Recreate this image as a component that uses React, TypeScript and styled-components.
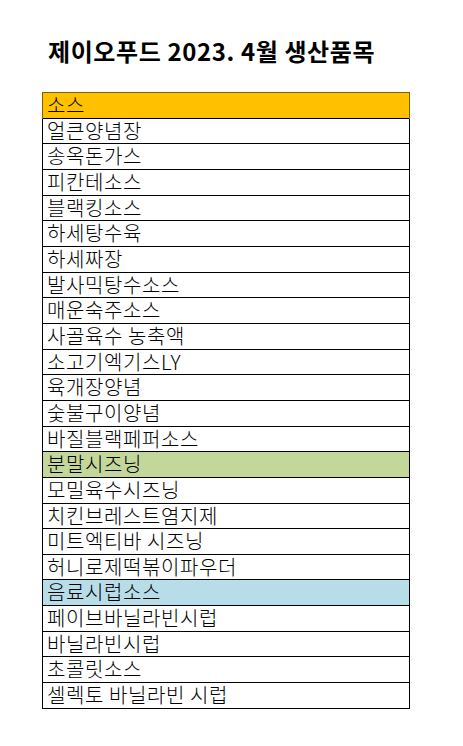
import styled, { createGlobalStyle } from "styled-components";

const Global = createGlobalStyle`
  body {
    margin: 0;
    background: #fff;
    font-family: "Noto Sans CJK KR", "Noto Sans", sans-serif;
  }
`;

const Page = styled.div`
  padding: 36px 0 0 42px;
  width: 368px;
`;

const Title = styled.h1`
  margin: 0 0 26px 6px;
  font-size: 24px;
  line-height: 30px;
  font-weight: 700;
  color: #000;
  letter-spacing: 0.6px;
`;

const Sheet = styled.div`
  border: 1px solid #000;
  display: flex;
  flex-direction: column;
`;

const Row = styled.div<{ $bg?: string }>`
  height: 24.67px;
  border-top: 1px solid #000;
  &:first-child {
    border: 1px solid #7f6000;
    margin: -1px;
  }
  background: ${(p) => p.$bg || "#fff"};
  padding-left: 4px;
  font-size: 20px;
  line-height: 24px;
  font-weight: 300;
  letter-spacing: 0.6px;
  color: #000;
  white-space: nowrap;
`;

const rows: { name: string; bg?: string }[] = [
  { name: "소스", bg: "#ffc000" },
  { name: "얼큰양념장" },
  { name: "송옥돈가스" },
  { name: "피칸테소스" },
  { name: "블랙킹소스" },
  { name: "하세탕수육" },
  { name: "하세짜장" },
  { name: "발사믹탕수소스" },
  { name: "매운숙주소스" },
  { name: "사골육수 농축액" },
  { name: "소고기엑기스LY" },
  { name: "육개장양념" },
  { name: "숯불구이양념" },
  { name: "바질블랙페퍼소스" },
  { name: "분말시즈닝", bg: "#c4d79b" },
  { name: "모밀육수시즈닝" },
  { name: "치킨브레스트염지제" },
  { name: "미트엑티바 시즈닝" },
  { name: "허니로제떡볶이파우더" },
  { name: "음료시럽소스", bg: "#b7dee8" },
  { name: "페이브바닐라빈시럽" },
  { name: "바닐라빈시럽" },
  { name: "초콜릿소스" },
  { name: "셀렉토 바닐라빈 시럽" },
];

export default function App() {
  return (
    <Page>
      <Global />
      <Title>제이오푸드 2023. 4월 생산품목</Title>
      <Sheet>
        {rows.map((r) => (
          <Row key={r.name} $bg={r.bg}>
            {r.name}
          </Row>
        ))}
      </Sheet>
    </Page>
  );
}
